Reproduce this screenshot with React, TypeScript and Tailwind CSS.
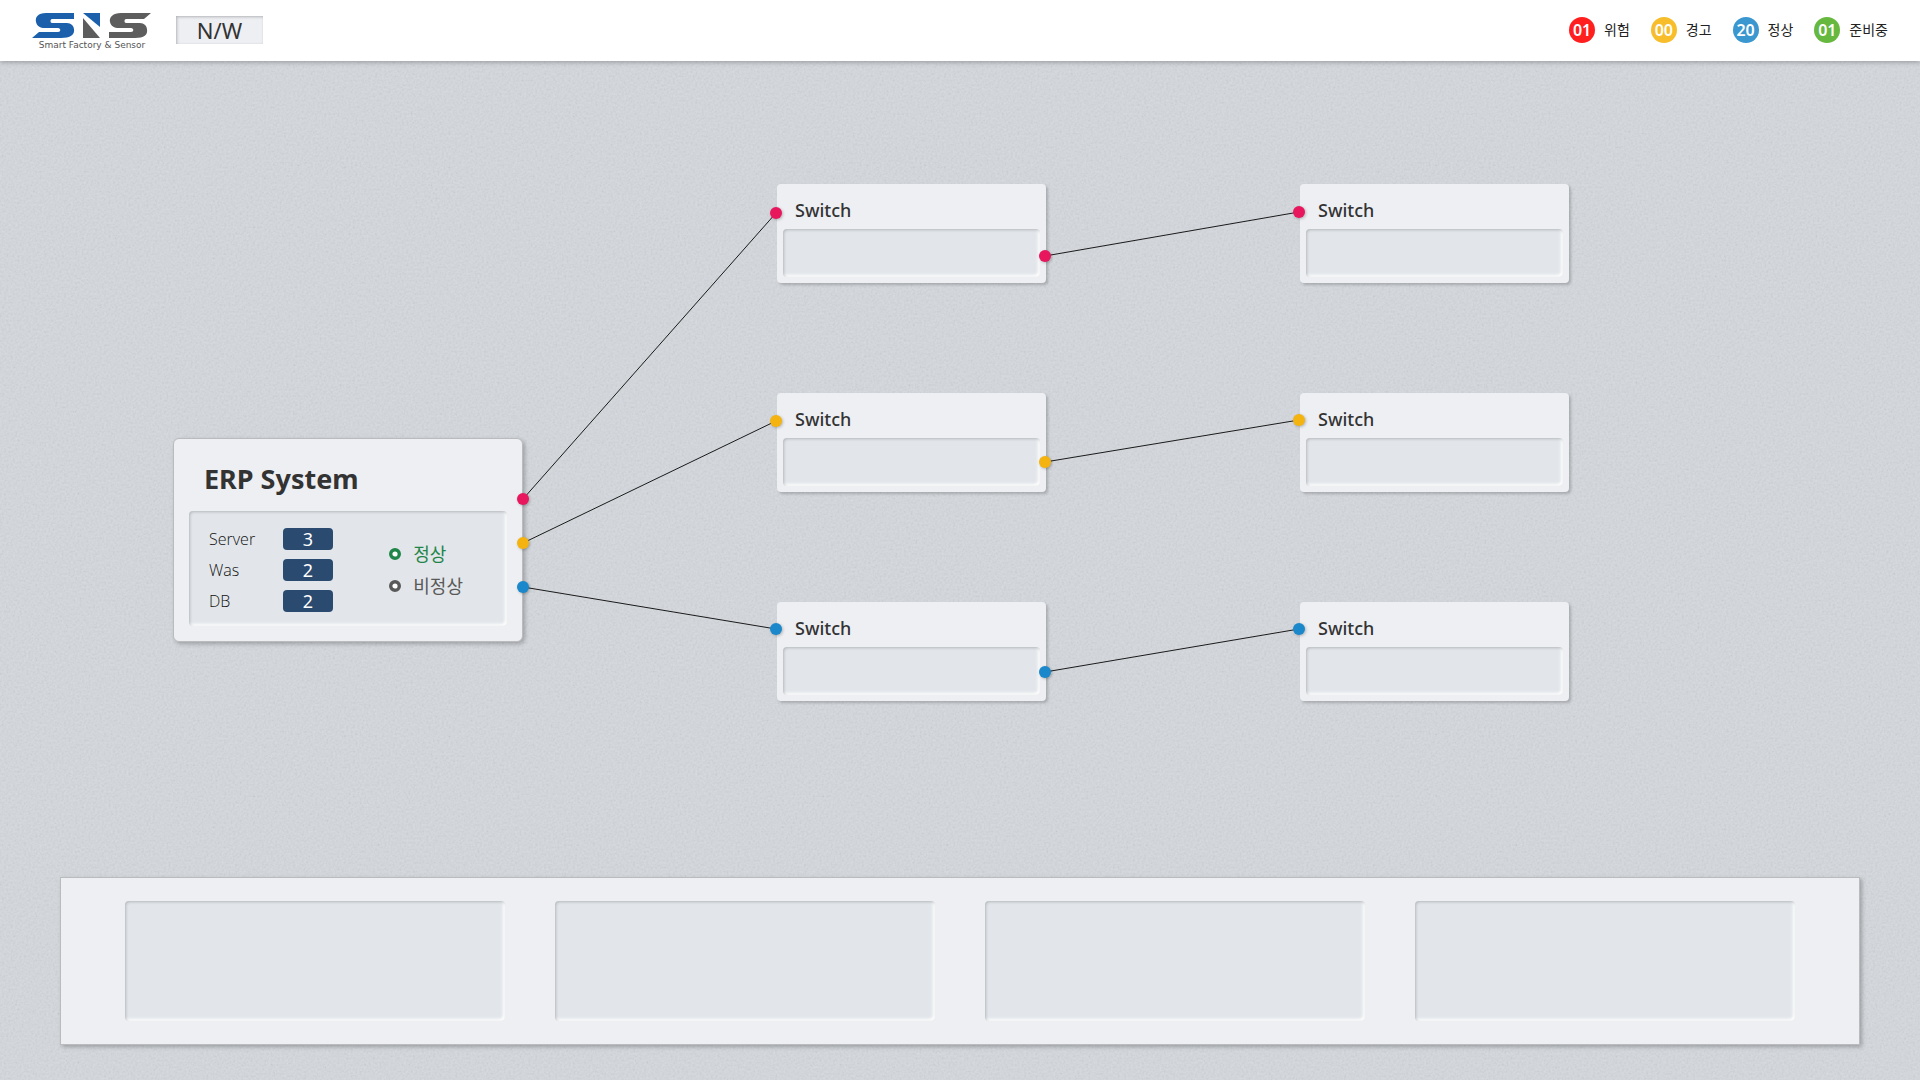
import React from "react";

type Tone = "rose" | "amber" | "blue";

const statuses = [
  { count: "01", label: "위험", color: "bg-[#ff1f1f]" },
  { count: "00", label: "경고", color: "bg-[#f7bd2b]" },
  { count: "20", label: "정상", color: "bg-[#3a97cf]" },
  { count: "01", label: "준비중", color: "bg-[#66b83f]" },
];

const toneClass: Record<Tone, string> = {
  rose: "bg-[#e8175d]",
  amber: "bg-[#f5b30f]",
  blue: "bg-[#1a88cb]",
};

const resources = [
  { name: "Server", value: 3 },
  { name: "Was", value: 2 },
  { name: "DB", value: 2 },
];

const switches = [
  { id: "a1", place: "left-[777px] top-[123px]" },
  { id: "a2", place: "left-[1300px] top-[123px]" },
  { id: "b1", place: "left-[777px] top-[332px]" },
  { id: "b2", place: "left-[1300px] top-[332px]" },
  { id: "c1", place: "left-[777px] top-[541px]" },
  { id: "c2", place: "left-[1300px] top-[541px]" },
];

const links: { tone: Tone; from: [number, number]; to: [number, number] }[] = [
  { tone: "rose", from: [523, 438], to: [776, 152] },
  { tone: "rose", from: [1045, 195], to: [1299, 151] },
  { tone: "amber", from: [523, 482], to: [776, 360] },
  { tone: "amber", from: [1045, 401], to: [1299, 359] },
  { tone: "blue", from: [523, 526], to: [776, 568] },
  { tone: "blue", from: [1045, 611], to: [1299, 568] },
];

const inset =
  "rounded bg-[#e2e6ea] shadow-[inset_1px_1px_3px_rgba(0,0,0,0.2),inset_-2px_-2px_3px_#fff]";

function Logo() {
  return (
    <svg viewBox="0 0 120 26" className="block h-[26px] w-[120px]" aria-label="SNS">
      <path
        d="M42 0H14C6 0 3 4 4 9c1 4 4 6 9 6h13c3 0 3 4 0 4H7L0 25h29c9 0 14-3 13-9-1-5-4-6-9-6H20c-2 0-2-4 0-4h22z"
        fill="#1c60ac"
      />
      <path d="M51 0h17v14z" fill="#1c60ac" />
      <path d="M51 5l17 20H51z" fill="#5d5d5d" />
      <path
        d="M119 0H89C81 0 77 4 78 9c1 4 4 6 9 6h12c3 0 3 4 0 4H77v6h26c9 0 13-3 12-9-1-5-4-6-9-6H94c-2 0-2-4 0-4h18z"
        fill="#5d5d5d"
      />
    </svg>
  );
}

function Ring() {
  return (
    <svg viewBox="0 0 12 12" className="size-3" aria-hidden="true">
      <circle cx="6" cy="6" r="4.3" fill="#fff" stroke="currentColor" strokeWidth="3.4" />
    </svg>
  );
}

function SwitchNode({ place }: { place: string }) {
  return (
    <article
      className={`absolute w-[269px] rounded bg-[#edeff3] px-1.5 pb-1.5 shadow-[2px_2px_3px_rgba(0,0,0,0.2)] ${place}`}
    >
      <h2 className="px-3 pt-3 pb-[5px] text-lg leading-7 font-medium text-[#333]">Switch</h2>
      <div className={`h-12 ${inset}`} />
    </article>
  );
}

function Dot({ tone, at }: { tone: Tone; at: [number, number] }) {
  return (
    <span
      className={`absolute size-3 -translate-1/2 rounded-full shadow-[1px_1px_3px_rgba(0,0,0,0.25)] ${toneClass[tone]}`}
      style={{ left: at[0], top: at[1] }}
    />
  );
}

export default function App() {
  return (
    <div className="relative isolate flex min-h-screen flex-col bg-[#d4d8dd] font-['Noto_Sans','Noto_Sans_CJK_KR',sans-serif] text-[#333]">
      <svg className="absolute inset-0 -z-10 size-full opacity-8" aria-hidden="true">
        <filter id="grain" x="0" y="0" width="100%" height="100%">
          <feTurbulence type="fractalNoise" baseFrequency="0.45" numOctaves="3" />
          <feColorMatrix values="1.2 0 0 0 -0.1  1.2 0 0 0 -0.1  1.2 0 0 0 -0.1  0 0 0 0 1" />
        </filter>
        <rect width="100%" height="100%" filter="url(#grain)" />
      </svg>

      <header className="flex h-[61px] items-center justify-between bg-white px-8 pb-0.5 shadow-[0_1px_5px_rgba(0,0,0,0.3)]">
        <div className="flex items-center gap-6">
          <div className="pt-1">
            <Logo />
            <p className="text-center font-['DejaVu_Sans',sans-serif] text-[9px] leading-3 text-[#555]">
              Smart Factory &amp; Sensor
            </p>
          </div>
          <h1 className="w-[87px] bg-[#edeff3] text-center text-[22px] leading-7 shadow-[inset_1px_1px_3px_rgba(0,0,0,0.25)]">
            N/W
          </h1>
        </div>
        <ul className="flex items-center gap-[21px]">
          {statuses.map((s) => (
            <li key={s.label} className="flex items-center gap-[9px]">
              <span
                className={`flex size-[26px] items-center justify-center rounded-full text-base font-semibold text-white ${s.color}`}
              >
                {s.count}
              </span>
              <span className="text-sm text-[#222]">{s.label}</span>
            </li>
          ))}
        </ul>
      </header>

      <main className="flex flex-1 flex-col">
        <section className="relative min-h-[816px] flex-1" aria-label="Network map">
          <article className="absolute top-[377px] left-[173px] w-[350px] rounded-md border border-[#b9bbbd] bg-[#edeff3] px-[15px] pb-[15px] shadow-[2px_2px_4px_rgba(0,0,0,0.25)]">
            <h2 className="px-[15px] pt-5 pb-3 text-[27px] leading-10 font-bold">ERP System</h2>
            <div className={`flex h-[115px] items-center justify-between pt-[3px] pr-11 pl-5 ${inset}`}>
              <dl className="flex flex-col gap-[9px]">
                {resources.map((r) => (
                  <div key={r.name} className="flex items-center">
                    <dt className="w-[74px] font-['Open_Sans',sans-serif] text-base leading-[22px] font-light text-[#111]">
                      {r.name}
                    </dt>
                    <dd className="w-[50px] rounded bg-[#2b4a70] text-center text-lg leading-[22px] text-white">
                      {r.value}
                    </dd>
                  </div>
                ))}
              </dl>
              <ul className="flex flex-col gap-2 text-lg leading-6">
                <li className="flex items-center gap-3 text-[#1f8549]">
                  <Ring />
                  정상
                </li>
                <li className="flex items-center gap-3 text-[#595959]">
                  <Ring />
                  비정상
                </li>
              </ul>
            </div>
          </article>

          {switches.map((s) => (
            <SwitchNode key={s.id} place={s.place} />
          ))}

          <svg className="absolute inset-0 size-full" aria-hidden="true">
            {links.map((l) => (
              <line
                key={l.from.join()}
                x1={l.from[0]}
                y1={l.from[1]}
                x2={l.to[0]}
                y2={l.to[1]}
                stroke="#1a1a1a"
              />
            ))}
          </svg>
          {links.map((l) => (
            <React.Fragment key={l.from.join()}>
              <Dot tone={l.tone} at={l.from} />
              <Dot tone={l.tone} at={l.to} />
            </React.Fragment>
          ))}
        </section>

        <section className="mx-[60px] mb-[35px] grid grid-cols-4 gap-[50px] border border-[#b9bbbd] bg-[#edeff3] px-16 py-[23px] shadow-[2px_2px_4px_rgba(0,0,0,0.25)]">
          {["p1", "p2", "p3", "p4"].map((id) => (
            <div key={id} className={`h-[120px] ${inset}`} />
          ))}
        </section>
      </main>
    </div>
  );
}
